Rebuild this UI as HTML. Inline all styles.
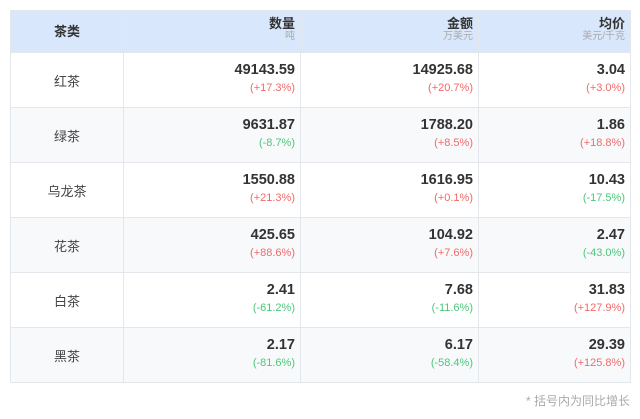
<!DOCTYPE html>
<html><head><meta charset="utf-8"><style>
body{margin:0;background:#fff;font-family:"Liberation Sans","Noto Sans CJK SC",sans-serif;width:640px;height:419px;overflow:hidden;position:relative}
table{position:absolute;left:10px;top:10px;border-collapse:collapse;width:620px;table-layout:fixed}
td,th{border:1px solid #e3e6eb;padding:0 5px 0 0;text-align:right;color:#333}
th{background:#d8e7fb;height:42px;font-size:13px;font-weight:bold;line-height:15px;vertical-align:top;padding-top:5px;box-sizing:border-box}
th .u{display:block;font-size:10px;color:#aaa;font-weight:normal;line-height:12px}
td{height:54px;vertical-align:top}
td.n{text-align:center;vertical-align:middle;font-size:13px;color:#444;padding:0}
th.n{text-align:center;padding:0;vertical-align:middle}
.v{display:block;font-weight:bold;font-size:14.5px;margin-top:9px;line-height:17px;color:#333}
.p{display:block;font-size:11px;margin-top:3px;line-height:13px}
.r{color:#f06a6a}.g{color:#4cc77a}
tr.s td{background:#f8f9fb}
.foot{position:absolute;right:10px;top:392px;font-size:12px;color:#aaa}
</style></head><body>
<table>
<colgroup><col style="width:113px"><col style="width:177px"><col style="width:178px"><col style="width:152px"></colgroup>
<tr><th class="n">茶类</th><th>数量<span class="u">吨</span></th><th>金额<span class="u">万美元</span></th><th>均价<span class="u">美元/千克</span></th></tr>
<tr><td class="n">红茶</td><td><span class="v">49143.59</span><span class="p r">(+17.3%)</span></td><td><span class="v">14925.68</span><span class="p r">(+20.7%)</span></td><td><span class="v">3.04</span><span class="p r">(+3.0%)</span></td></tr>
<tr class="s"><td class="n">绿茶</td><td><span class="v">9631.87</span><span class="p g">(-8.7%)</span></td><td><span class="v">1788.20</span><span class="p r">(+8.5%)</span></td><td><span class="v">1.86</span><span class="p r">(+18.8%)</span></td></tr>
<tr><td class="n">乌龙茶</td><td><span class="v">1550.88</span><span class="p r">(+21.3%)</span></td><td><span class="v">1616.95</span><span class="p r">(+0.1%)</span></td><td><span class="v">10.43</span><span class="p g">(-17.5%)</span></td></tr>
<tr class="s"><td class="n">花茶</td><td><span class="v">425.65</span><span class="p r">(+88.6%)</span></td><td><span class="v">104.92</span><span class="p r">(+7.6%)</span></td><td><span class="v">2.47</span><span class="p g">(-43.0%)</span></td></tr>
<tr><td class="n">白茶</td><td><span class="v">2.41</span><span class="p g">(-61.2%)</span></td><td><span class="v">7.68</span><span class="p g">(-11.6%)</span></td><td><span class="v">31.83</span><span class="p r">(+127.9%)</span></td></tr>
<tr class="s"><td class="n">黑茶</td><td><span class="v">2.17</span><span class="p g">(-81.6%)</span></td><td><span class="v">6.17</span><span class="p g">(-58.4%)</span></td><td><span class="v">29.39</span><span class="p r">(+125.8%)</span></td></tr>
</table>
<div class="foot">* 括号内为同比增长</div>
</body></html>
